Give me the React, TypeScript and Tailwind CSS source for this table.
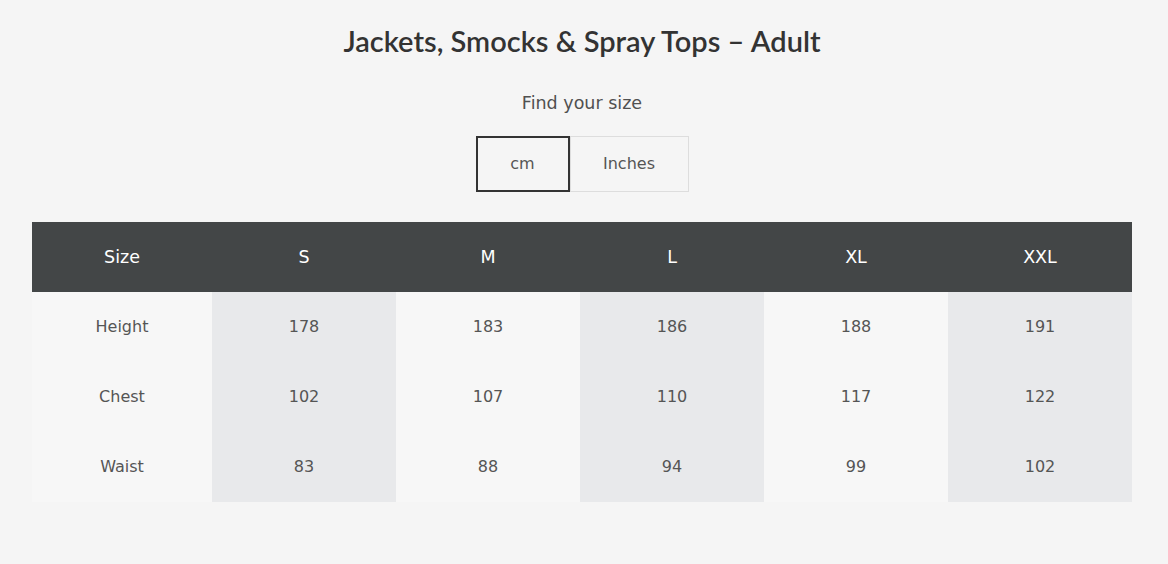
import { useState } from "react";

const sizes = ["S", "M", "L", "XL", "XXL"];

const rows = {
  cm: [
    { label: "Height", values: [178, 183, 186, 188, 191] },
    { label: "Chest", values: [102, 107, 110, 117, 122] },
    { label: "Waist", values: [83, 88, 94, 99, 102] },
  ],
  in: [
    { label: "Height", values: [70, 72, 73, 74, 75] },
    { label: "Chest", values: [40, 42, 43, 46, 48] },
    { label: "Waist", values: [33, 35, 37, 39, 40] },
  ],
};

const App = () => {
  const [unit, setUnit] = useState<"cm" | "in">("cm");

  return (
    <div className="min-h-[564px] bg-[#f5f5f5] pt-[23px] pl-[32px] pr-[36px] font-['DejaVu_Sans',sans-serif] text-[#555]">
      <h1 className="text-center text-[29px] leading-[36px] font-semibold text-[#333] font-['Lato',sans-serif]">
        Jackets, Smocks &amp; Spray Tops – Adult
      </h1>
      <p className="mt-[32px] text-center text-[17.5px] leading-[24px] text-[#505050]">
        Find your size
      </p>
      <div className="mt-[21px] flex justify-center">
        <button
          onClick={() => setUnit("cm")}
          className={
            unit === "cm"
              ? "w-[94px] h-[56px] border-2 border-[#333] text-[16px] text-[#555]"
              : "w-[94px] h-[56px] border border-[#ddd] text-[16px] text-[#555]"
          }
        >
          cm
        </button>
        <button
          onClick={() => setUnit("in")}
          className={
            unit === "in"
              ? "w-[119px] h-[56px] border-2 border-[#333] text-[16px] text-[#555]"
              : "w-[119px] h-[56px] border border-[#ddd] text-[16px] text-[#555]"
          }
        >
          Inches
        </button>
      </div>

      <div className="mt-[30px] w-[1100px]">
        <div className="grid grid-cols-[180px_repeat(5,184px)] h-[70px] bg-[#434647] text-white text-[17.5px]">
          <div className="flex items-center justify-center">Size</div>
          {sizes.map((s) => (
            <div key={s} className="flex items-center justify-center">
              {s}
            </div>
          ))}
        </div>
        {rows[unit].map((row) => (
          <div
            key={row.label}
            className="grid grid-cols-[180px_repeat(5,184px)] h-[70px] text-[16px] text-[#555]"
          >
            <div className="flex items-center justify-center bg-[#f7f7f7]">{row.label}</div>
            {row.values.map((v, i) => (
              <div
                key={i}
                className={
                  i % 2 === 0
                    ? "flex items-center justify-center bg-[#e8e9eb]"
                    : "flex items-center justify-center bg-[#f7f7f7]"
                }
              >
                {v}
              </div>
            ))}
          </div>
        ))}
      </div>
    </div>
  );
};

export default App;
